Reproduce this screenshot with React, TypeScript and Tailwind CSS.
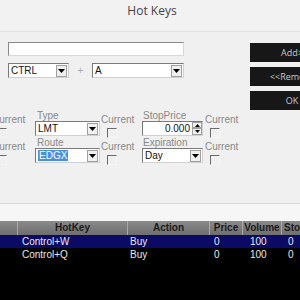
import React from "react";

const Arrow = () => (
  <div className="w-[11px] h-[12px] bg-[#f0f0f0] border border-[#a0a0a0] flex items-center justify-center shrink-0">
    <svg width="7" height="4" viewBox="0 0 7 4"><path d="M0 0H7L3.5 4Z" fill="#000" /></svg>
  </div>
);

const Select = ({ value, w, highlight }: { value: string; w: string; highlight?: boolean }) => (
  <div className={`${w} h-[15px] bg-white border border-[#7a7a7a] border-r-[#d0d0d0] border-b-[#d0d0d0] flex items-center justify-between pl-[2px] pr-[1px]`}>
    {highlight ? (
      <span className="bg-[#4a90e2] text-white px-[1px] leading-[11px]">{value}</span>
    ) : (
      <span className="leading-[11px] text-[#111]">{value}</span>
    )}
    <Arrow />
  </div>
);

const Check = () => (
  <div className="w-[10px] h-[10px] border-t border-l border-[#6a6a6a] border-r border-b border-r-[#f5f5f5] border-b-[#f5f5f5] bg-[#f0f0f0]" />
);

const CurrentCol = ({ w, cb }: { w: string; cb: string }) => (
  <div className={`${w} flex flex-col shrink-0`}>
    <div className="h-[11px] mt-[4px] text-[#888] leading-[11px]">Current</div>
    <div className={`${cb} mt-[3px]`}><Check /></div>
  </div>
);

export default function App() {
  const font = { fontFamily: '"Liberation Sans", Arial, sans-serif' };
  return (
    <div className="w-[300px] h-[300px] overflow-hidden bg-[#f0f0f0] flex flex-col text-[10px]" style={font}>
      <div className="h-[32px] shrink-0 bg-[#f2f2f2] border-b border-[#e2e2e2] flex items-start justify-center pt-[2px]">
        <span className="text-[12px] text-[#444] ml-[4px]" style={{ fontFamily: '"Open Sans", sans-serif' }}>Hot Keys</span>
      </div>
      <div className="flex h-[78px] shrink-0">
        <div className="w-[242px] shrink-0 pl-[8px] pt-[10px] flex flex-col gap-[7px]">
          <div className="w-[176px] h-[14px] bg-white border border-[#8a8a8a] border-r-[#d8d8d8] border-b-[#d8d8d8]" />
          <div className="flex items-center">
            <Select value="CTRL" w="w-[61px]" />
            <span className="w-[23px] text-center text-[#aaa]">+</span>
            <Select value="A" w="w-[92px]" />
          </div>
        </div>
        <div className="flex flex-col gap-[5px] pt-[11px] ml-[8px]">
          {["Add>", "<<Remove", "OK"].map((t) => (
            <div key={t} className="w-[84px] h-[19px] bg-[#171717] text-[#c8c8c8] text-[9px] flex items-center justify-center shrink-0" style={{ fontFamily: '"Open Sans", sans-serif' }}>
              {t}
            </div>
          ))}
        </div>
      </div>
      <div className="flex flex-col ml-[-8px]">
        {[0, 1].map((r) => (
          <div key={r} className="flex h-[27px]">
            <CurrentCol w="w-[43px]" cb="ml-[5px]" />
            <div className="w-[66px] flex flex-col shrink-0">
              <div className="h-[11px] pl-[2px] text-[#888] leading-[11px]">{r === 0 ? "Type" : "Route"}</div>
              <Select value={r === 0 ? "LMT" : "EDGX"} w="w-[65px]" highlight={r === 1} />
            </div>
            <CurrentCol w="w-[41px]" cb="ml-[6px]" />
            <div className="w-[63px] flex flex-col shrink-0">
              <div className="h-[11px] pl-[1px] text-[#888] leading-[11px]">{r === 0 ? "StopPrice" : "Expiration"}</div>
              {r === 0 ? (
                <div className="w-[61px] h-[15px] bg-white border border-[#7a7a7a] border-r-[#d0d0d0] border-b-[#d0d0d0] flex items-center justify-end">
                  <span className="leading-[11px] text-[#111] mr-[2px]">0.000</span>
                  <div className="w-[10px] h-[13px] flex flex-col">
                    <div className="h-[6px] bg-[#f0f0f0] border border-[#a0a0a0] flex items-center justify-center">
                      <svg width="5" height="3" viewBox="0 0 5 3"><path d="M0 3H5L2.5 0Z" fill="#000" /></svg>
                    </div>
                    <div className="h-[7px] bg-[#f0f0f0] border border-[#a0a0a0] flex items-center justify-center">
                      <svg width="5" height="3" viewBox="0 0 5 3"><path d="M0 0H5L2.5 3Z" fill="#000" /></svg>
                    </div>
                  </div>
                </div>
              ) : (
                <Select value="Day" w="w-[61px]" />
              )}
            </div>
            <CurrentCol w="w-[40px]" cb="ml-[5px]" />
          </div>
        ))}
      </div>
      <div className="mt-[39px] h-[18px] shrink-0 bg-[#f6f6f6] border-t border-[#dcdcdc]" />
      <div className="flex-1 bg-black flex flex-col">
        <div className="flex h-[14px] shrink-0 bg-gradient-to-b from-[#8a8a8a] to-[#6e6e6e] text-[#1a1a1a] font-bold text-[10px]">
          {[
            ["", "w-[18px]"],
            ["HotKey", "w-[110px]"],
            ["Action", "w-[82px]"],
            ["Price", "w-[33px]"],
            ["Volume", "w-[39px]"],
            ["Sto", "w-[40px]"],
          ].map(([t, w], i) => (
            <div key={i} className={`${w} shrink-0 flex items-center ${t === "Sto" ? "justify-start pl-[2px]" : "justify-center"} border-r border-[#a8a8a8] leading-[12px]`}>
              {t}
            </div>
          ))}
        </div>
        {[
          ["Control+W", true],
          ["Control+Q", false],
        ].map(([k, sel]) => (
          <div key={k as string} className={`flex h-[13px] shrink-0 text-[#e8e8e8] text-[10px] items-center ${sel ? "bg-[#0b0b66]" : ""}`}>
            <div className="w-[18px] shrink-0" />
            <div className="w-[110px] shrink-0 pl-[4px]">{k as string}</div>
            <div className="w-[82px] shrink-0 pl-[2px]">Buy</div>
            <div className="w-[33px] shrink-0 pl-[4px]">0</div>
            <div className="w-[39px] shrink-0 pl-[7px]">100</div>
            <div className="w-[40px] shrink-0 pl-[6px]">0</div>
          </div>
        ))}
      </div>
    </div>
  );
}
